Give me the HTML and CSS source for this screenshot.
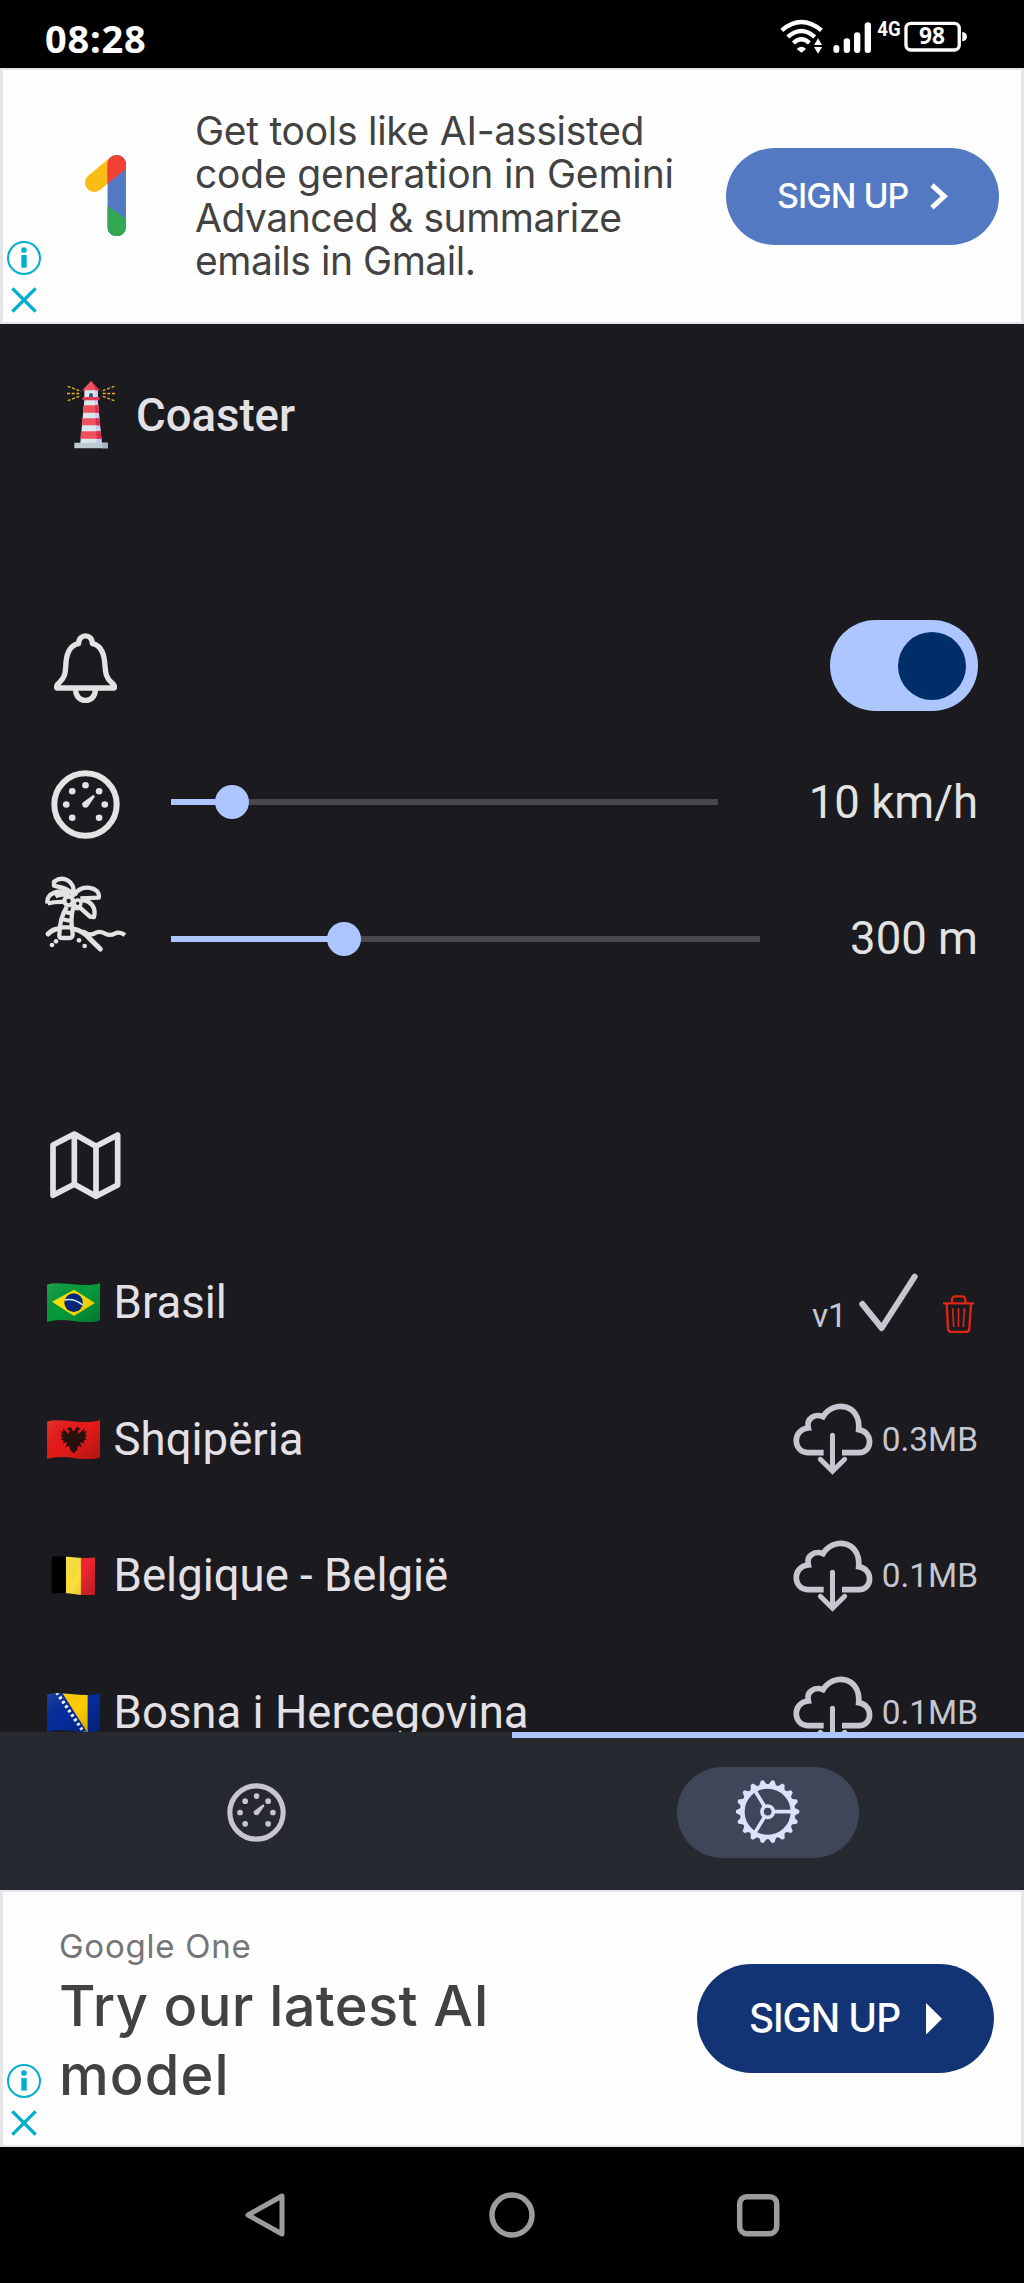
FILE: index.html
```html
<!DOCTYPE html>
<html lang="en">
<head>
<meta charset="utf-8">
<title>Coaster</title>
<link rel="stylesheet" href="styles.css">
</head>
<body>
<svg class="defs" width="0" height="0" aria-hidden="true">
  <defs>
    <clipPath id="wave"><path d="M0 5Q20 -2 70 3Q130 11 160 0V112Q135 122 85 115Q30 107 0 117Z"/></clipPath>
    <linearGradient id="shade" x1="0" y1="0" x2="1" y2="1"><stop offset="0" stop-color="#fff" stop-opacity=".12"/><stop offset=".5" stop-color="#000" stop-opacity="0"/><stop offset="1" stop-color="#000" stop-opacity=".25"/></linearGradient>
    <symbol id="gauge" viewBox="0 0 208 208">
      <circle cx="104" cy="104" r="94" fill="none" stroke="currentColor" stroke-width="18"/>
      <g fill="currentColor"><circle cx="104" cy="46" r="10"/><circle cx="64" cy="64" r="10"/><circle cx="145" cy="64" r="10"/><circle cx="46" cy="104" r="10"/><circle cx="162" cy="104" r="10"/><circle cx="64" cy="144" r="10"/><circle cx="145" cy="144" r="10"/><path d="M95 99L126 76Q132 74 131 82L112 110Q104 118 96 110Q92 104 95 99Z"/></g>
    </symbol>
    <symbol id="cloud" viewBox="40 448 240 240">
      <g fill="none" stroke="currentColor" stroke-width="17"><path d="M132 609H84C39 607 37 539 86 535C79 505 107 491 130 501C161 450 244 462 237 540C282 547 279 609 238 609H187"/><path d="M158.500 557V660M122 629L158.500 665L195 629" stroke-linecap="round" stroke-width="15"/></g>
    </symbol>
    <symbol id="info" viewBox="0 0 102 102"><circle cx="51" cy="51" r="48" fill="none" stroke="#00aecd" stroke-width="6"/><circle cx="51" cy="27" r="8.500" fill="#00aecd"/><path d="M43 42H59V80H43Z" fill="#00aecd"/></symbol>
    <symbol id="cross" viewBox="0 0 78 78"><path d="M4 4L74 74M74 4L4 74" stroke="#00aecd" stroke-width="10"/></symbol>
    <path id="tooth" d="M80 -12L95 -4V4L80 12Z"/>
  </defs>
</svg>

<header class="status">
  <span class="clock">08:28</span>
  <svg class="status-icons" viewBox="60 55 570 115">
    <g fill="none" stroke="#fff"><path d="M65 92Q124 42 184 92M83 112Q124 76 164 112M100 130Q124 108 148 130" stroke-width="13"/><rect x="438" y="71" width="160" height="80" rx="15" stroke-width="10"/></g>
    <g fill="#fff"><path d="M110 148Q124 135 138 148L124 159ZM162 136L174 116L186 136ZM162 142H186L174 162Z"/><rect x="220" y="136" width="18" height="24" rx="9"/><rect x="251" y="116" width="19" height="44" rx="9"/><rect x="282" y="98" width="19" height="62" rx="9"/><rect x="314" y="68" width="19" height="92" rx="9"/><path d="M607 97Q621 99 621 111Q621 123 607 125Z"/>
    <text x="352" y="110" font-size="58" textLength="70" lengthAdjust="spacingAndGlyphs" class="net">4G</text><text x="477" y="133" font-size="67" textLength="78" lengthAdjust="spacingAndGlyphs" class="pct">98</text></g>
  </svg>
</header>

<section class="ad ad-top">
  <div class="ad-badges"><svg class="i-info"><use href="#info"/></svg><svg class="i-cross"><use href="#cross"/></svg></div>
  <svg class="one-logo" viewBox="0 0 123 244">
    <clipPath id="stem"><rect x="67" width="56" height="244" rx="28"/></clipPath>
    <path d="M28 83L95 28" stroke="#fbbc16" stroke-width="56" stroke-linecap="round"/>
    <g clip-path="url(#stem)"><path d="M67 0H123V244H67Z" fill="#5279c1"/><path d="M67 0H123V42L67 86Z" fill="#ee4134"/><path d="M67 152L123 192V244H67Z" fill="#32a853"/></g>
  </svg>
  <p class="ad-copy"><span class="l1">Get tools like AI-assisted</span><br><span class="l2">code generation in Gemini</span><br><span class="l3">Advanced &amp; summarize</span><br><span class="l4">emails in Gmail.</span></p>
  <a class="cta cta-light"><span>SIGN UP</span><svg class="chev" viewBox="0 0 53 80"><path d="M6 6L43 40L6 74" fill="none" stroke="#fff" stroke-width="15"/></svg></a>
</section>

<main class="app">
  <div class="brand">
    <svg class="lighthouse" viewBox="108 62 150 208">
      <g stroke="#e3b122" stroke-width="4" stroke-dasharray="9 5"><path d="M113 81L153 96M111 102.500H153M113 124L153 109M253 81L213 96M255 102.500H213M253 124L213 109"/></g>
      <path d="M163 90H204V114H163Z" fill="#dce6ed"/><path d="M195 90H204V114H195Z" fill="#c9cdeb"/>
      <path d="M177 114V107A6 6 0 0 1 189 107V114Z" fill="#385b82"/>
      <path d="M183 65L209 93H157Z" fill="#f1505f"/><path d="M183 65L209 93H198Z" fill="#dc2c4c"/>
      <path d="M163 121H203L215 251H151Z" fill="#dce6ed"/><path d="M194 121H203L215 251H199Z" fill="#cfc9ec"/>
      <path d="M161 138H205L207 160H159ZM157 177H209L211 198H155ZM153 216H212L214 238H151Z" fill="#f1505f"/>
      <path d="M195 138H205L207 160H196ZM197 177H209L211 198H198ZM199 216H212L214 238H200Z" fill="#d92d50"/>
      <rect x="157" y="113" width="52" height="10" rx="4" fill="#e23c52"/>
      <path d="M133 250H233V267H133Z" fill="#bccad4"/><path d="M217 250H233V267H217Z" fill="#a8b7c2"/>
    </svg>
    <h1>Coaster</h1>
  </div>

  <section class="settings">
    <div class="row">
      <svg class="row-icon" viewBox="48 77 249 240"><g fill="none" stroke="#e3e3e3" stroke-width="16" stroke-linejoin="round"><path d="M80 263H253Q255 254 245 247C224 228 227 213 224 185Q219 136 187 130C188 99 145 99 146 130Q113 136 108 185C106 213 108 228 88 247Q78 254 80 263Z"/><path d="M137 268C137 311 196 311 196 268"/></g></svg>
      <span class="switch"><span class="knob"></span></span>
    </div>
    <div class="row">
      <svg class="row-gauge"><use href="#gauge"/></svg>
      <div class="slider speed"><span class="fill"></span><span class="thumb"></span></div>
      <span class="value">10 km/h</span>
    </div>
    <div class="row">
      <svg class="row-palm" viewBox="48 821 249 390"><g fill="none" stroke="#e3e3e3" stroke-width="13" stroke-linejoin="round">
        <path d="M72 844C98 825 136 839 131 884C116 865 98 862 72 856Z"/>
        <path d="M53 909C45 879 93 862 119 883M53 909Q78 903 106 905M76 888Q94 878 116 886"/>
        <path d="M134 884C151 848 214 860 206 892L151 894"/>
        <path d="M155 899C184 901 199 923 192 950L180 949L150 922Q134 928 130 914"/>
        <circle cx="116" cy="902" r="13"/><circle cx="143" cy="909" r="10" stroke-width="10"/>
        <path d="M110 920Q88 955 88 1006Q88 1013 98 1013H118Q129 1013 128 1000Q120 958 130 920M101 934L124 939M93 956L123 962M89 981H128"/>
        <path d="M54 1001Q70 984 89 985M128 985Q159 991 179 1015L211 1046" stroke-linecap="round" stroke-width="15"/>
        <path d="M158 993Q180 1008 194 999T224 999T254 1000T285 1004"/>
      </g><g fill="#e3e3e3"><circle cx="78" cy="1023" r="7"/><circle cx="66" cy="1034" r="7"/><circle cx="147" cy="1020" r="7"/><circle cx="164" cy="1037" r="7"/></g></svg>
      <div class="slider distance"><span class="fill"></span><span class="thumb"></span></div>
      <span class="value">300 m</span>
    </div>
  </section>

  <section class="maps">
    <div class="row"><svg class="row-icon" viewBox="48 49 249 240"><path d="M69 106L133 73L198 110L263 76V226L198 260L133 224L69 257ZM133 73V224M198 110V260" fill="none" stroke="#e4e1e6" stroke-width="17" stroke-linejoin="round"/></svg></div>
    <div class="row">
      <svg class="flag" viewBox="0 0 160 118"><g clip-path="url(#wave)"><path d="M0 -5H160V123H0Z" fill="#069a3b"/><path d="M15 56L81 20L144 60L81 99Z" fill="#ffdf00"/><circle cx="80" cy="59" r="28" fill="#07267d"/><path d="M53 51Q82 45 107 66" fill="none" stroke="#d9ebf5" stroke-width="5"/><path d="M0 -5H160V123H0Z" fill="url(#shade)"/></g></svg>
      <span class="country">Brasil</span>
      <span class="size version">v1</span>
      <svg class="check" viewBox="238 68 177 180"><path d="M248 161L306 233L405 79" fill="none" stroke="#c6c6d0" stroke-width="18" stroke-linecap="round" stroke-linejoin="round"/></svg>
      <svg class="trash" viewBox="486 66 98 184"><g fill="none" stroke="#de2516" stroke-width="7" stroke-linejoin="round"><path d="M489 160H582M516 158V150Q516 139 527 139H545Q556 139 556 150V158M500 162L504 237Q505 246 514 246H558Q567 246 568 237L573 162"/><path d="M518 175L521 231M535.500 175V231M553 175L550 231" stroke-width="5"/></g></svg>
    </div>
    <div class="row">
      <svg class="flag" viewBox="0 0 160 118"><g clip-path="url(#wave)"><path d="M0 -5H160V123H0Z" fill="#e51b18"/><path d="M80 35L70 20L59 26L68 32L65 42L48 25L49 35L40 33L47 44L39 45L48 54L40 57L51 62L47 70L61 67L55 82L67 77L70 91L80 100L90 91L93 77L105 82L99 67L113 70L109 62L120 57L112 54L121 45L113 44L120 33L111 35L112 25L95 42L92 32L101 26L90 20Z" fill="#28100d"/><path d="M0 -5H160V123H0Z" fill="url(#shade)"/></g></svg>
      <span class="country">Shqipëria</span>
      <svg class="cloud"><use href="#cloud"/></svg><span class="size">0.3MB</span>
    </div>
    <div class="row">
      <svg class="flag" viewBox="0 0 160 118"><g clip-path="url(#wave)"><path d="M14 -5H57V123H14Z" fill="#000"/><path d="M57 -5H102V123H57Z" fill="#fde03b"/><path d="M102 -5H144V123H102Z" fill="#ef2532"/><path d="M57 -5H144V123H57Z" fill="url(#shade)"/></g></svg>
      <span class="country">Belgique - België</span>
      <svg class="cloud"><use href="#cloud"/></svg><span class="size">0.1MB</span>
    </div>
    <div class="row">
      <svg class="flag" viewBox="0 0 160 118"><g clip-path="url(#wave)"><path d="M0 -5H160V123H0Z" fill="#052c9c"/><path d="M43 -5H122V120Z" fill="#ffcd00"/><path d="M29 -2L112 120" stroke="#fff" stroke-width="10" stroke-dasharray="8 8"/><path d="M0 -5H160V123H0Z" fill="url(#shade)"/></g></svg>
      <span class="country">Bosna i Hercegovina</span>
      <svg class="cloud"><use href="#cloud"/></svg><span class="size">0.1MB</span>
    </div>
  </section>
</main>

<nav class="tabs">
  <a class="tab"><svg class="tab-gauge"><use href="#gauge"/></svg></a>
  <a class="tab active"><span class="pill"><svg class="gear" viewBox="-98 -98 196 196"><g fill="none" stroke="#dae2fd"><circle r="76" stroke-width="14"/><circle r="17" stroke-width="11"/><path d="M20 0H72M-10 17L-38 63M-10 -17L-38 -63" stroke-width="11"/></g><g fill="#dae2fd"><use href="#tooth"/><use href="#tooth" transform="rotate(20)"/><use href="#tooth" transform="rotate(40)"/><use href="#tooth" transform="rotate(60)"/><use href="#tooth" transform="rotate(80)"/><use href="#tooth" transform="rotate(100)"/><use href="#tooth" transform="rotate(120)"/><use href="#tooth" transform="rotate(140)"/><use href="#tooth" transform="rotate(160)"/><use href="#tooth" transform="rotate(180)"/><use href="#tooth" transform="rotate(200)"/><use href="#tooth" transform="rotate(220)"/><use href="#tooth" transform="rotate(240)"/><use href="#tooth" transform="rotate(260)"/><use href="#tooth" transform="rotate(280)"/><use href="#tooth" transform="rotate(300)"/><use href="#tooth" transform="rotate(320)"/><use href="#tooth" transform="rotate(340)"/></g></svg></span></a>
</nav>

<section class="ad ad-bottom">
  <div class="ad-badges"><svg class="i-info"><use href="#info"/></svg><svg class="i-cross"><use href="#cross"/></svg></div>
  <div class="ad-text">
    <p class="advertiser">Google One</p>
    <p class="headline"><span class="h1">Try our latest AI</span><br><span class="h2">model</span></p>
  </div>
  <a class="cta cta-dark"><span>SIGN UP</span><svg class="play" viewBox="0 0 48 95"><path d="M0 0L48 47L0 95Z" fill="#fff"/></svg></a>
</section>

<footer class="sysnav">
  <svg viewBox="0 0 46 46"><path d="M39 4V42L5 23Z" fill="none" stroke="#9c9c9c" stroke-width="5" stroke-linejoin="round"/></svg>
  <svg viewBox="0 0 46 46"><circle cx="23" cy="23" r="20" fill="none" stroke="#9c9c9c" stroke-width="5.500"/></svg>
  <svg viewBox="0 0 46 46"><rect x="4.700" y="4.700" width="37" height="37" rx="7" fill="none" stroke="#9c9c9c" stroke-width="5.500"/></svg>
</footer>
</body>
</html>
```
FILE: styles.css
```css
* { box-sizing: border-box; }
body { margin: 0; width: 1024px; height: 2283px; overflow: hidden; background: #000; font-family: Roboto, sans-serif; display: flex; flex-direction: column; }
.defs { position: absolute; }
svg { display: block; flex: none; }
p, h1 { margin: 0; }
p, span, h1 { white-space: nowrap; }

.status { height: 68px; flex: none; display: flex; align-items: center; justify-content: space-between; padding: 7px 54px 0 45px; }
.clock { font: 700 38px/1 "Noto Sans", sans-serif; letter-spacing: .8px; color: #fff; }
.status-icons { width: 190px; height: 38.3px; }
.net { font-family: Roboto, sans-serif; font-weight: 700; }
.pct { font-family: "Noto Sans", sans-serif; font-weight: 700; }

.ad { flex: none; height: 256px; background: #fefefe; border: 3px solid #e4e6e8; border-width: 2px 3px; display: flex; font-family: Inter, sans-serif; }
.ad-badges { width: 42px; flex: none; display: flex; flex-direction: column; align-items: center; justify-content: flex-end; gap: 12px; padding: 0 0 9px 0; }
.i-info { width: 34px; height: 34px; }
.i-cross { width: 26px; height: 26px; }
.one-logo { width: 41px; height: 81.3px; margin: 85px 0 0 40px; }
.ad-copy { margin: 39px 0 0 69px; width: 501px; font-size: 39px; line-height: 43.3px; color: #424242; }
.l1 { letter-spacing: -.27px; }
.l2 { letter-spacing: -.18px; }
.l3, .l4 { letter-spacing: -.47px; }
.cta { flex: none; display: flex; align-items: center; border-radius: 60px; color: #fff; font-weight: 500; }
.cta-light { width: 273px; height: 96.5px; margin: 78px 0 0 30px; padding-left: 51px; background: #5279c1; font-size: 34px; letter-spacing: -1px; }
.cta-light span { width: 153px; margin-top: -2px; }
.chev { width: 17.6px; height: 26.7px; }

.app { flex: none; height: 1408px; overflow: hidden; background: #1b1b1f; color: #e4e1e6; padding: 0 46px; }
.brand { height: 182px; display: flex; align-items: center; padding-left: 20px; }
.lighthouse { width: 50px; height: 69.3px; }
.brand h1 { font-size: 45.5px; font-weight: 500; margin-left: 20px; }
.settings { margin-top: 91.5px; }
.maps { margin-top: 91px; }
.row { height: 136.5px; display: flex; align-items: center; font-size: 45.5px; }
.row-icon { width: 83px; height: 80px; }
.row-gauge { width: 69px; height: 69px; margin: 4px 51px 0 5px; color: #e3e3e3; }
.row-palm { width: 83px; height: 130px; margin-right: 42px; overflow: visible; }
.switch { margin-left: auto; width: 148.500px; height: 91px; border-radius: 46px; background: #adc6ff; display: flex; align-items: center; justify-content: flex-end; padding-right: 12px; }
.knob { width: 68px; height: 68px; border-radius: 50%; background: #002e69; }
.slider { height: 34px; display: flex; align-items: center; background: linear-gradient(#48484a, #48484a) center / 100% 6px no-repeat; }
.speed { width: 547px; }
.distance { width: 589px; }
.fill { height: 6px; background: #adc6ff; }
.thumb { width: 34px; height: 34px; border-radius: 50%; background: #adc6ff; margin-left: -1px; }
.speed .fill { width: 44.500px; }
.distance .fill { width: 156.500px; }
.value { margin-left: auto; color: #e3e3e3; }
.flag { width: 53.3px; height: 39.3px; margin: 0 13px 0 1.300px; }
.country { margin-right: auto; }
.size { font-size: 33.4px; color: #c6c6d0; }
.version { padding-top: 26px; margin-right: 12.500px; }
.check { width: 59px; height: 60px; }
.trash { width: 32.7px; height: 61.3px; margin: 0 3.300px 0 23.700px; }
.cloud { width: 80px; height: 80px; color: #c6c6d0; margin-right: 8.700px; }

.tabs { flex: none; height: 158px; background: #262930; display: grid; grid-template-columns: 1fr 1fr; }
.tab { display: flex; align-items: center; justify-content: center; padding-top: 2px; border-top: 0 solid #adc6ff; color: #c6c6d0; }
.active { border-top-width: 6px; padding: 0 0 4px; }
.tab-gauge { width: 59px; height: 59px; }
.pill { width: 182px; height: 91px; border-radius: 46px; background: #404659; display: flex; align-items: center; justify-content: center; }
.gear { width: 65.3px; height: 65.3px; }

.ad-bottom { height: 257px; }
.ad-text { width: 637px; padding: 33px 0 0 14px; }
.advertiser { font-size: 33px; line-height: 42px; letter-spacing: .75px; color: #757575; }
.headline { font-size: 56px; line-height: 69px; font-weight: 500; color: #424242; margin-top: 5px; }
.h1 { letter-spacing: .38px; }
.h2 { letter-spacing: 1.100px; }
.cta-dark { width: 297px; height: 109px; margin: 72px 0 0 15px; padding-left: 52px; background: #123474; font-size: 39px; letter-spacing: -1.100px; }
.cta-dark span { width: 177px; margin-top: -2px; }
.play { width: 16px; height: 31.7px; }

.sysnav { flex: 1; display: flex; justify-content: center; align-items: center; gap: 200px; }
.sysnav svg { width: 46px; height: 46px; }
```
